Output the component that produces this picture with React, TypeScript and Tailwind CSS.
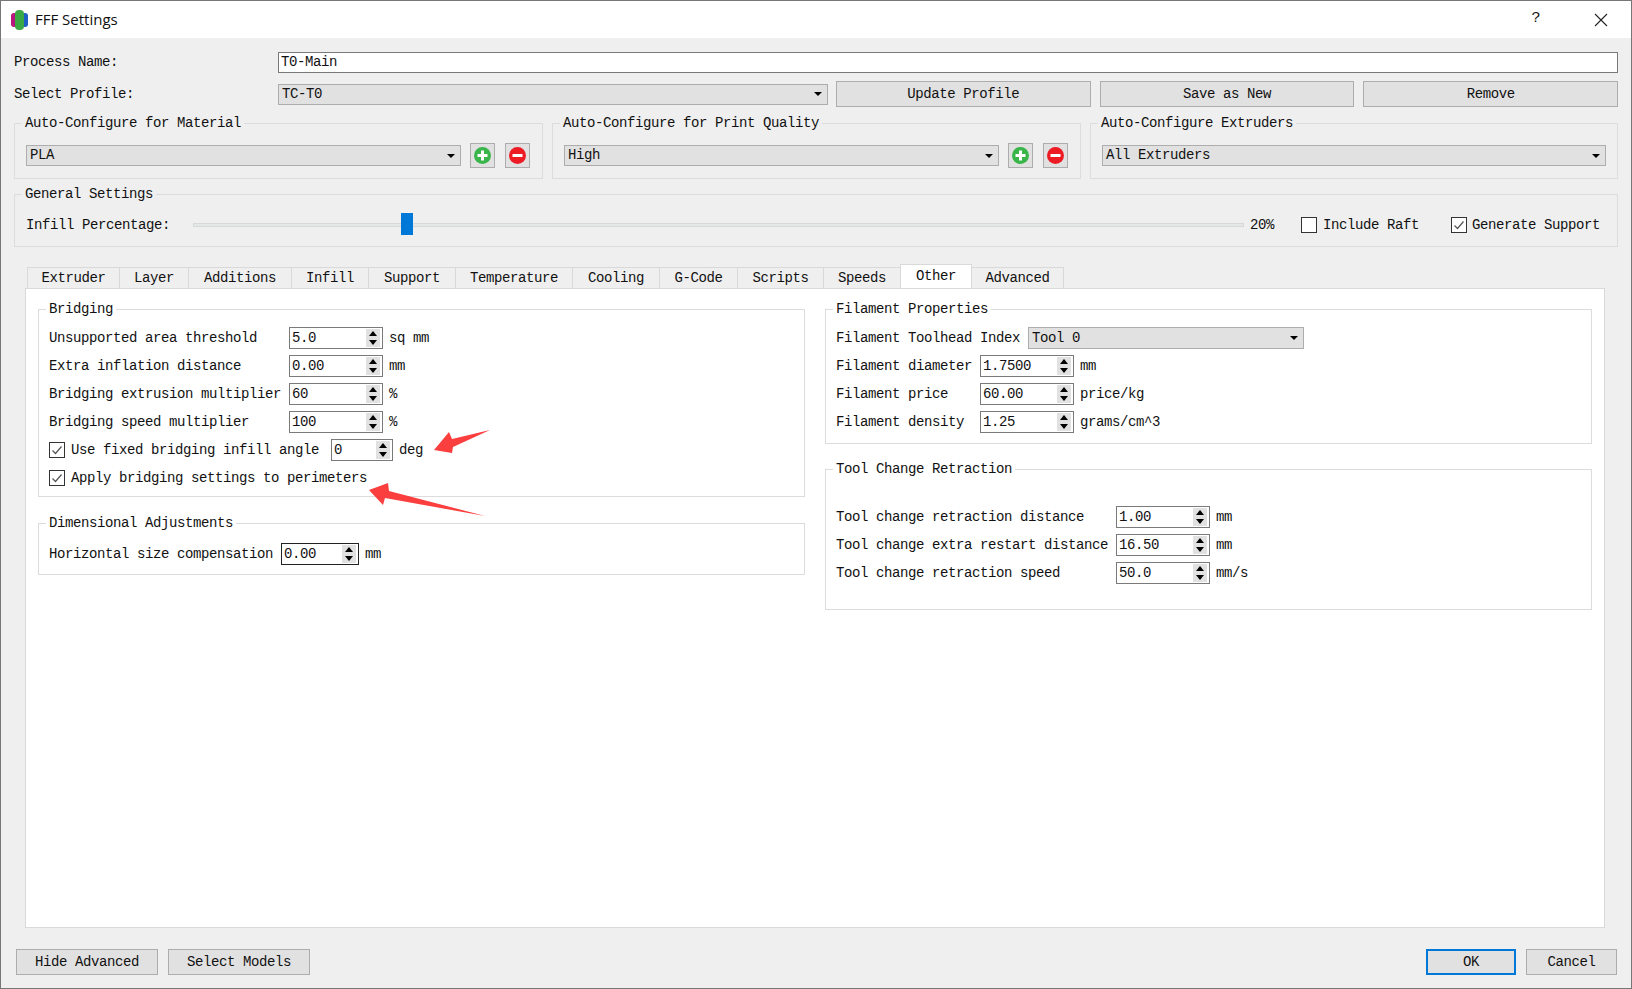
import type { ReactNode } from 'react';

const TABS = [
  { name: 'Extruder', w: 'w-[92px]' },
  { name: 'Layer', w: 'w-[69px]' },
  { name: 'Additions', w: 'w-[103px]' },
  { name: 'Infill', w: 'w-[77px]' },
  { name: 'Support', w: 'w-[87px]' },
  { name: 'Temperature', w: 'w-[117px]' },
  { name: 'Cooling', w: 'w-[87px]' },
  { name: 'G-Code', w: 'w-[78px]' },
  { name: 'Scripts', w: 'w-[86px]' },
  { name: 'Speeds', w: 'w-[77px]' },
];

function Group({ title, className, children }: { title: string; className: string; children?: ReactNode }) {
  return (
    <div className={`relative border border-[#dcdcdc] ${className}`}>
      <span className="absolute -top-[9px] left-[7px] bg-inherit px-[3px] leading-4">{title}</span>
      {children}
    </div>
  );
}

function Combo({ value, className }: { value: string; className: string }) {
  return (
    <div className={`flex h-[21px] items-center justify-between border border-[#adadad] bg-[#e1e1e1] pl-[3px] pr-[5px] ${className}`}>
      <span>{value}</span>
      <span className="h-0 w-0 border-x-[4px] border-t-[4px] border-x-transparent border-t-black" />
    </div>
  );
}

function Btn({ label, className, focused }: { label: string; className: string; focused?: boolean }) {
  return (
    <button
      className={`flex h-[26px] items-center justify-center bg-[#e1e1e1] ${
        focused ? 'border-2 border-[#0078d7]' : 'border border-[#adadad]'
      } ${className}`}
    >
      {label}
    </button>
  );
}

function Spin({ value, className, dark }: { value: string; className: string; dark?: boolean }) {
  return (
    <div className={`flex h-[22px] shrink-0 items-center justify-between border bg-white pl-[2px] pr-[2px] ${dark ? 'border-[#222]' : 'border-[#7a7a7a]'} ${className}`}>
      <span>{value}</span>
      <div className="flex h-[18px] w-[14px] flex-col justify-between bg-[#e1e1e1] py-[2px]">
        <span className="mx-auto h-0 w-0 border-x-[4px] border-b-[5px] border-x-transparent border-b-black" />
        <span className="mx-auto h-0 w-0 border-x-[4px] border-t-[5px] border-x-transparent border-t-black" />
      </div>
    </div>
  );
}

function Check({ checked }: { checked?: boolean }) {
  return (
    <span className="flex h-4 w-4 shrink-0 items-center justify-center border border-[#333] bg-white">
      {checked && (
        <svg width="12" height="12" viewBox="0 0 12 12" fill="none">
          <path d="M1.5 6.5 L4.5 9.5 L10.5 2.5" stroke="#555" strokeWidth="1.2" />
        </svg>
      )}
    </span>
  );
}

function IconBtn({ kind, className }: { kind: 'add' | 'remove'; className: string }) {
  return (
    <button className={`flex h-[25px] w-[25px] shrink-0 items-center justify-center border border-[#adadad] bg-[#e1e1e1] ${className}`}>
      <svg width="17" height="17" viewBox="0 0 17 17">
        <circle cx="8.5" cy="8.5" r="8.5" fill={kind === 'add' ? '#39b54a' : '#ed1c24'} />
        <rect x="3.5" y="7" width="10" height="3" fill="#fff" />
        {kind === 'add' && <rect x="7" y="3.5" width="3" height="10" fill="#fff" />}
      </svg>
    </button>
  );
}

function Row({ label, labelW, value, unit, spinW = 'w-[94px]' }: { label: string; labelW: string; value: string; unit: string; spinW?: string }) {
  return (
    <div className="flex h-[22px] items-center">
      <span className={`shrink-0 whitespace-pre ${labelW}`}>{label}</span>
      <Spin value={value} className={spinW} />
      <span className="ml-[6px]">{unit}</span>
    </div>
  );
}

export default function App() {
  return (
    <div className="relative flex h-[989px] w-[1632px] flex-col overflow-hidden border border-[#777] bg-[#efefef] font-['Liberation_Mono',monospace] text-[14px] tracking-[-0.4px] text-[#111]">
      {/* title bar */}
      <div className="flex h-[37px] shrink-0 items-center bg-white pl-[10px]">
        <svg width="17" height="20" viewBox="0 0 17 20">
          <rect x="0" y="3" width="7" height="14" rx="3" fill="#b5177f" />
          <rect x="10" y="3" width="7" height="14" rx="3" fill="#1f5fc4" />
          <rect x="4" y="0" width="9" height="20" rx="4" fill="#3aa843" />
        </svg>
        <span className="ml-[7px] font-['Open_Sans',sans-serif] text-[15px] tracking-normal">FFF Settings</span>
        <span className="ml-auto mr-[54px] text-[15px]">?</span>
        <svg className="mr-[23px]" width="14" height="14" viewBox="0 0 14 14" fill="none">
          <path d="M1 1 L13 13 M13 1 L1 13" stroke="#222" strokeWidth="1.1" />
        </svg>
      </div>

      <div className="flex flex-1 flex-col px-[13px]">
        <div className="mt-[14px] flex h-[21px] items-center">
          <span className="w-[264px] shrink-0">Process Name:</span>
          <div className="flex h-[21px] flex-1 items-center border border-[#7a7a7a] bg-white pl-[2px]">T0-Main</div>
        </div>

        <div className="mt-[8px] flex h-[26px] items-center">
          <span className="w-[264px] shrink-0">Select Profile:</span>
          <Combo value="TC-T0" className="w-[550px]" />
          <div className="ml-[8px] flex flex-1 gap-[9px]">
            <Btn label="Update Profile" className="flex-1" />
            <Btn label="Save as New" className="flex-1" />
            <Btn label="Remove" className="flex-1" />
          </div>
        </div>

        <div className="mt-[16px] flex gap-[9px] bg-[#efefef]">
          <Group title="Auto-Configure for Material" className="flex h-[56px] flex-1 items-start bg-[#efefef] pl-[11px] pr-[12px] pt-[21px]">
            <Combo value="PLA" className="flex-1" />
            <IconBtn kind="add" className="-mt-[2px] ml-[9px]" />
            <IconBtn kind="remove" className="-mt-[2px] ml-[10px]" />
          </Group>
          <Group title="Auto-Configure for Print Quality" className="flex h-[56px] flex-1 items-start bg-[#efefef] pl-[11px] pr-[12px] pt-[21px]">
            <Combo value="High" className="flex-1" />
            <IconBtn kind="add" className="-mt-[2px] ml-[9px]" />
            <IconBtn kind="remove" className="-mt-[2px] ml-[10px]" />
          </Group>
          <Group title="Auto-Configure Extruders" className="flex h-[56px] flex-1 items-start bg-[#efefef] pl-[11px] pr-[11px] pt-[21px]">
            <Combo value="All Extruders" className="flex-1" />
          </Group>
        </div>

        <Group title="General Settings" className="mt-[15px] flex h-[53px] items-center bg-[#efefef] pl-[11px] pt-[9px]">
          <span className="w-[167px] shrink-0">Infill Percentage:</span>
          <div className="relative h-[4px] w-[1051px] shrink-0 border border-[#d6d9d9] bg-[#e6e8e8]">
            <span className="absolute -top-[11px] left-[207px] h-[22px] w-[12px] bg-[#0078d7]" />
          </div>
          <span className="ml-[6px] w-[51px] shrink-0">20%</span>
          <Check />
          <span className="ml-[6px] w-[128px] shrink-0">Include Raft</span>
          <Check checked />
          <span className="ml-[5px]">Generate Support</span>
        </Group>

        <div className="mt-[20px] flex h-[21px] items-end pl-[13px]">
          {TABS.map(t => (
            <div key={t.name} className={`flex h-[21px] items-center justify-center border-l border-t border-[#d9d9d9] ${t.w}`}>
              {t.name}
            </div>
          ))}
          <div className="relative z-10 flex h-[24px] w-[72px] items-center justify-center border-x border-t border-[#d9d9d9] bg-white">
            Other
          </div>
          <div className="flex h-[21px] w-[92px] items-center justify-center border-r border-t border-[#d9d9d9]">Advanced</div>
        </div>

        <div className="ml-[11px] flex h-[640px] w-[1580px] gap-[20px] border border-[#d9d9d9] bg-white pl-[12px] pt-[20px]">
          <div className="w-[767px] shrink-0">
            <Group title="Bridging" className="flex h-[188px] flex-col gap-[6px] bg-white px-[10px] pt-[17px]">
              <Row label="Unsupported area threshold" labelW="w-[240px]" value="5.0" unit="sq mm" />
              <Row label="Extra inflation distance" labelW="w-[240px]" value="0.00" unit="mm" />
              <Row label="Bridging extrusion multiplier" labelW="w-[240px]" value="60" unit="%" />
              <Row label="Bridging speed multiplier" labelW="w-[240px]" value="100" unit="%" />
              <div className="flex h-[22px] items-center">
                <Check checked />
                <span className="ml-[6px] w-[260px] shrink-0">Use fixed bridging infill angle</span>
                <Spin value="0" className="w-[62px]" />
                <span className="ml-[6px]">deg</span>
              </div>
              <div className="flex h-[22px] items-center">
                <Check checked />
                <span className="ml-[6px]">Apply bridging settings to perimeters</span>
              </div>
            </Group>
            <Group title="Dimensional Adjustments" className="mt-[26px] h-[52px] bg-white px-[10px] pt-[19px]">
              <div className="flex h-[22px] items-center">
                <span className="w-[232px] shrink-0">Horizontal size compensation</span>
                <Spin value="0.00" className="w-[78px]" dark />
                <span className="ml-[6px]">mm</span>
              </div>
            </Group>
          </div>

          <div className="w-[767px] shrink-0">
            <Group title="Filament Properties" className="flex h-[135px] flex-col gap-[6px] bg-white px-[10px] pt-[17px]">
              <div className="flex h-[22px] items-center">
                <span className="w-[192px] shrink-0">Filament Toolhead Index</span>
                <Combo value="Tool 0" className="h-[22px] w-[276px]" />
              </div>
              <Row label="Filament diameter" labelW="w-[144px]" value="1.7500" unit="mm" />
              <Row label="Filament price" labelW="w-[144px]" value="60.00" unit="price/kg" />
              <Row label="Filament density" labelW="w-[144px]" value="1.25" unit="grams/cm^3" />
            </Group>
            <Group title="Tool Change Retraction" className="mt-[25px] flex h-[141px] flex-col gap-[6px] bg-white px-[10px] pt-[36px]">
              <Row label="Tool change retraction distance" labelW="w-[280px]" value="1.00" unit="mm" />
              <Row label="Tool change extra restart distance" labelW="w-[280px]" value="16.50" unit="mm" />
              <Row label="Tool change retraction speed" labelW="w-[280px]" value="50.0" unit="mm/s" />
            </Group>
          </div>
        </div>

        <div className="mt-[21px] flex gap-[10px] pl-[2px] pr-[1px]">
          <Btn label="Hide Advanced" className="w-[142px]" />
          <Btn label="Select Models" className="w-[142px]" />
          <Btn label="OK" className="ml-auto w-[90px]" focused />
          <Btn label="Cancel" className="w-[91px]" />
        </div>
      </div>

      {/* red annotation arrows */}
      <svg className="absolute left-[0px] top-[0px]" width="1632" height="989" viewBox="0 0 1632 989">
        <path d="M433 449 L448 431 L451 438 L489 429 L452 446 L451 452 Z" fill="#fb3e3e" />
        <path d="M368 489 L387 482 L388 490 L484 515 L384 497 L382 504 Z" fill="#fb3e3e" />
      </svg>
    </div>
  );
}
